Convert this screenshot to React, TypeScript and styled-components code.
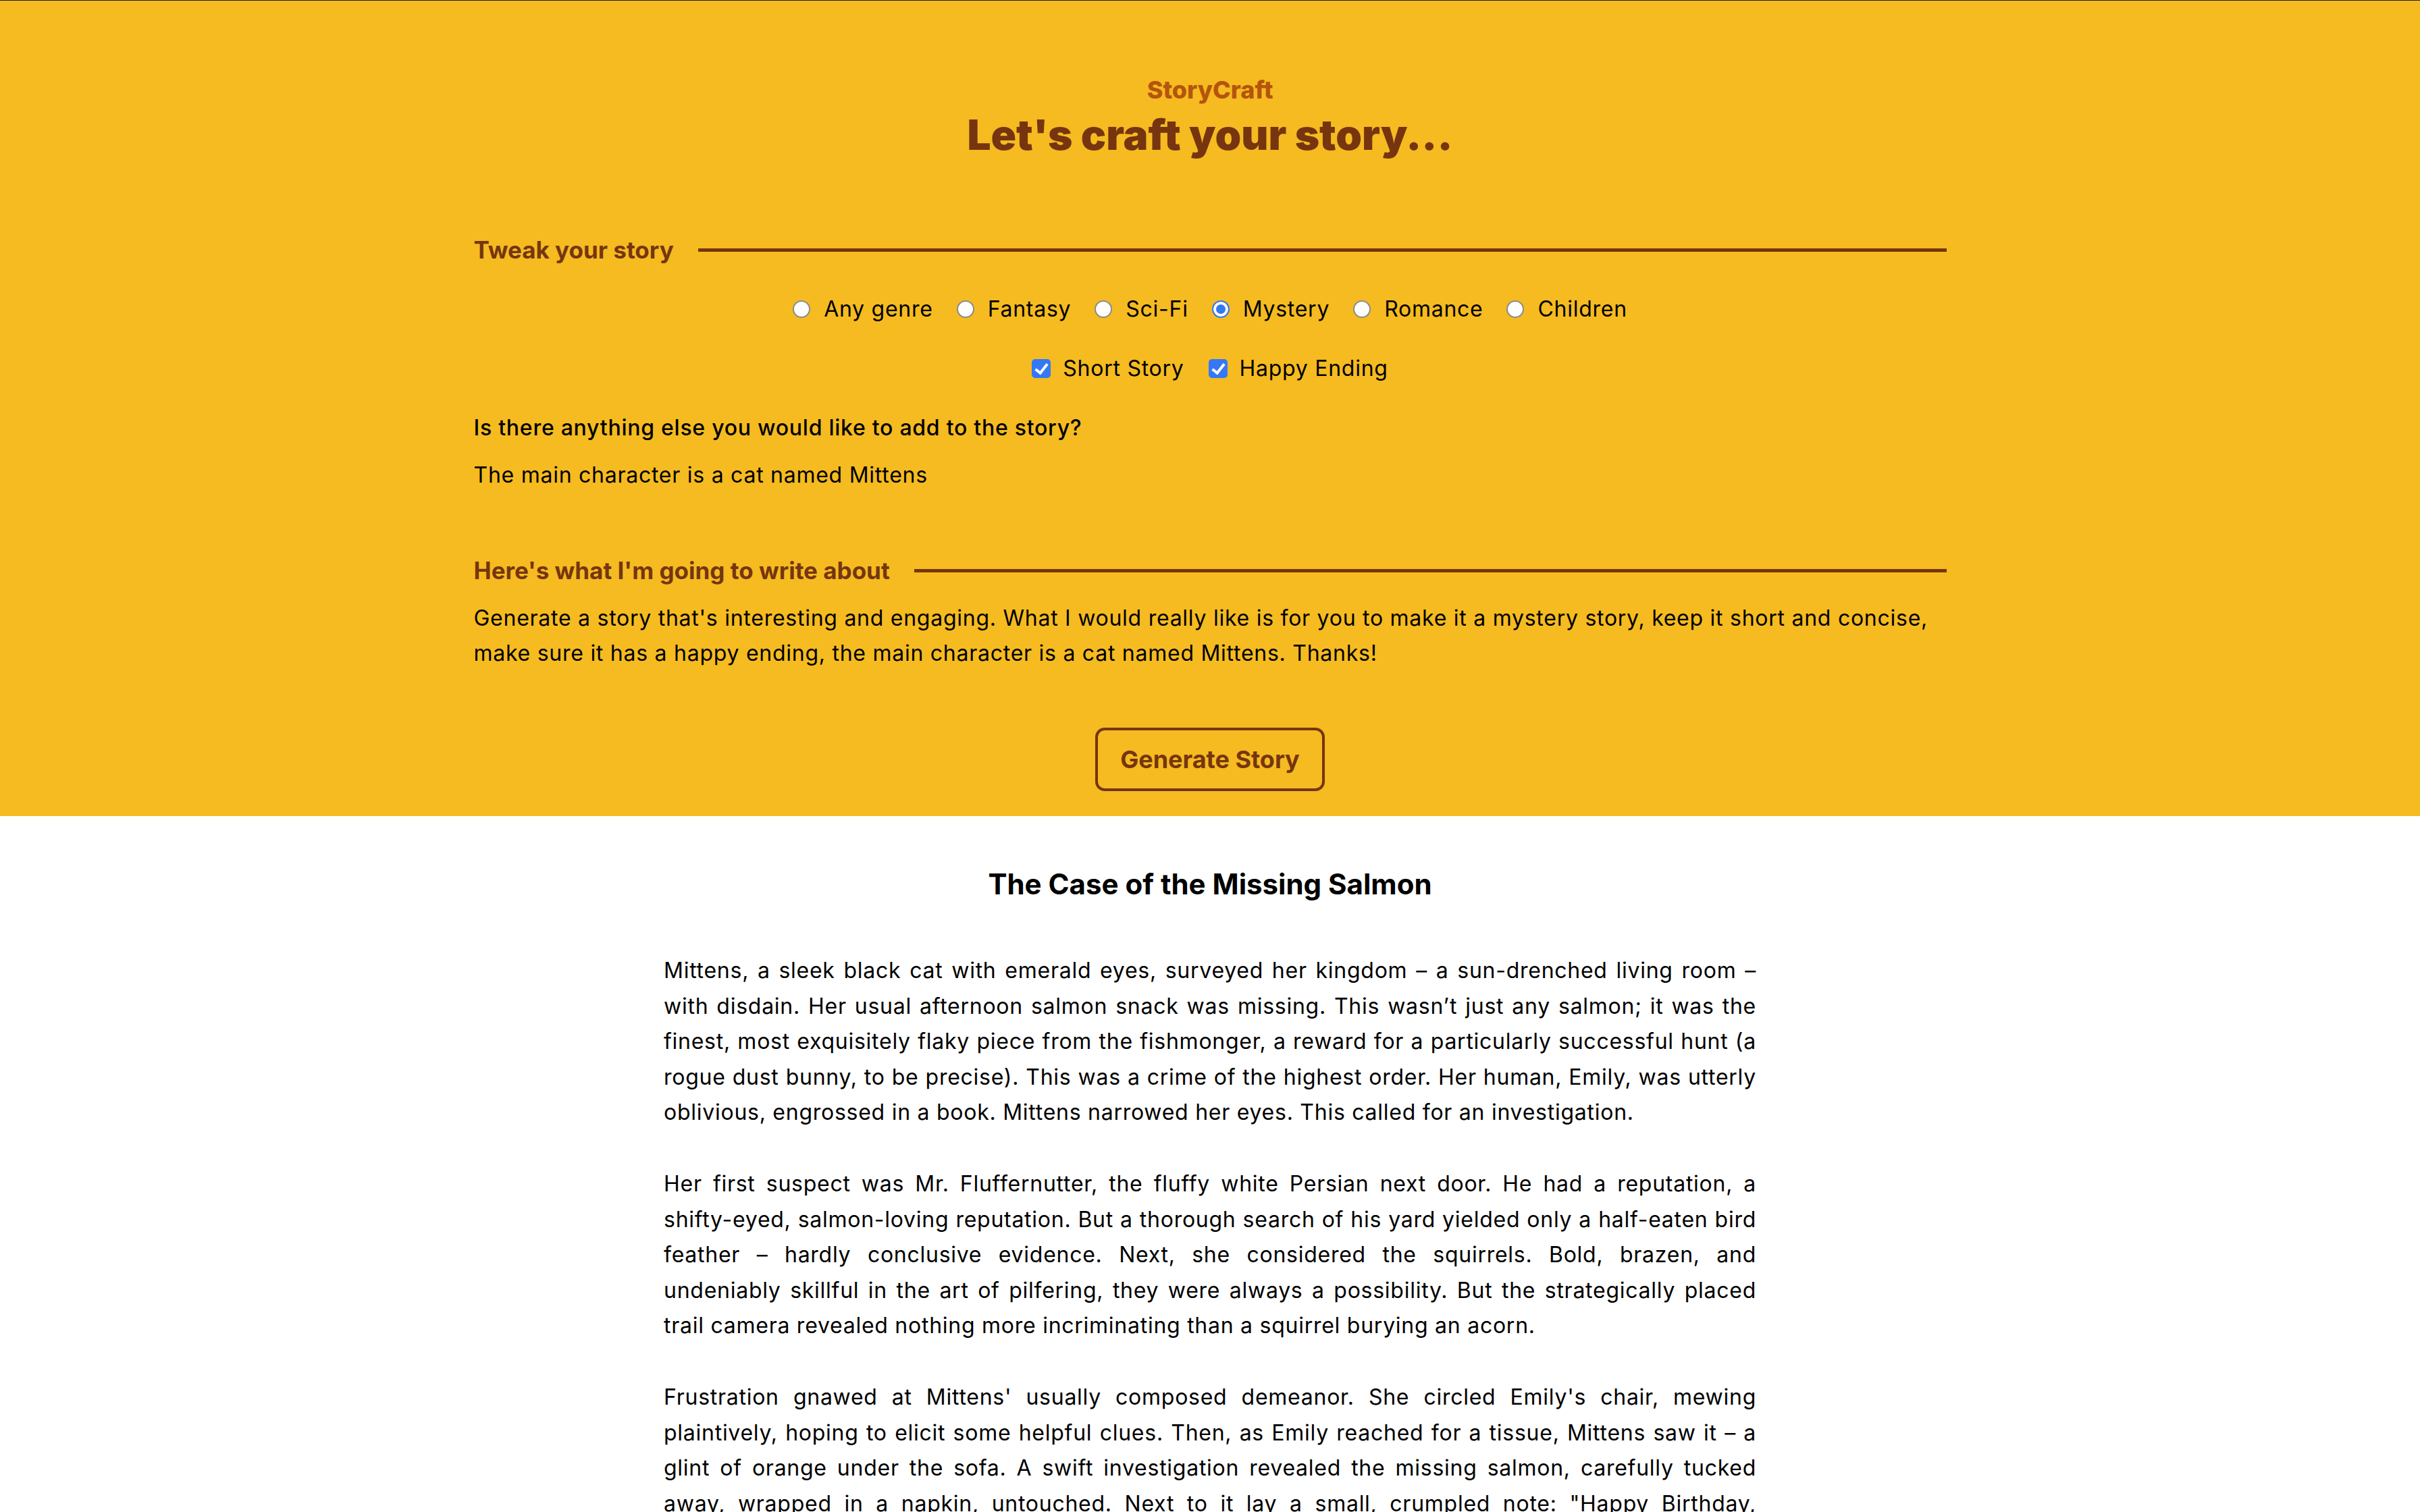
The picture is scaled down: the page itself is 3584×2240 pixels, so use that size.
import React from "react";
import styled, { createGlobalStyle } from "styled-components";

const BROWN = "#76350f";
const AMBER = "#b5540d";
const YELLOW = "#f5bb20";
const BLUE = "#3478f6";
const BODY_TRACKING = "0.74px";

const GlobalStyle = createGlobalStyle`
  html, body { margin: 0; padding: 0; background: #ffffff; }
  body {
    font-family: Inter, "Noto Sans", "Liberation Sans", sans-serif;
    color: #000;
    -webkit-font-smoothing: antialiased;
  }
  * { box-sizing: border-box; }
`;

const Page = styled.div`
  border-top: 1px solid #1e1e1e;
  min-height: 2240px;
`;

const Hero = styled.header`
  background: ${YELLOW};
  padding: 108px 0 37px;
`;

const Inner = styled.div`
  width: 2181px;
  margin: 0 auto;
`;

const Brand = styled.p`
  margin: 0;
  text-align: center;
  font-size: 36px;
  font-weight: 800;
  line-height: 48px;
  color: ${AMBER};
`;

const Title = styled.h1`
  margin: 7px 0 0;
  text-align: center;
  font-size: 62px;
  font-weight: 900;
  line-height: 72px;
  color: ${BROWN};
`;

const SectionHeading = styled.div<{ $mt: number }>`
  display: flex;
  align-items: center;
  gap: 36px;
  margin-top: ${(p) => p.$mt}px;
  font-size: 35px;
  font-weight: 700;
  line-height: 48px;
  color: ${BROWN};
`;

const Rule = styled.span`
  flex: 1;
  height: 5px;
  background: ${BROWN};
`;

const OptionRow = styled.div<{ $gap: number }>`
  display: flex;
  justify-content: center;
  align-items: center;
  gap: ${(p) => p.$gap}px;
  margin-top: 40px;
`;

const Option = styled.label<{ $gap: number }>`
  display: flex;
  align-items: center;
  gap: ${(p) => p.$gap}px;
  font-size: 32px;
  line-height: 48px;
  letter-spacing: ${BODY_TRACKING};
  color: #000;
`;

const Radio = styled.input.attrs({ type: "radio" })`
  appearance: none;
  margin: 0;
  width: 26px;
  height: 26px;
  border-radius: 50%;
  border: 2px solid #8b8b8b;
  background: #fff;
  &:checked {
    border-color: ${BLUE};
    background: ${BLUE};
    box-shadow: inset 0 0 0 4px #fff;
  }
`;

const Checkbox = styled.input.attrs({ type: "checkbox" })`
  appearance: none;
  position: relative;
  margin: 0;
  width: 28px;
  height: 28px;
  border-radius: 5px;
  border: 2px solid #8b8b8b;
  background: #fff;
  &:checked {
    border-color: ${BLUE};
    background: ${BLUE};
  }
  &:checked::after {
    content: "";
    position: absolute;
    left: 7px;
    top: 1px;
    width: 7px;
    height: 15px;
    border: solid #fff;
    border-width: 0 4px 4px 0;
    transform: rotate(38deg);
  }
`;

const Question = styled.p`
  margin: 40px 0 0;
  font-size: 32px;
  font-weight: 500;
  line-height: 48px;
  letter-spacing: ${BODY_TRACKING};
`;

const ExtraInput = styled.input`
  display: block;
  margin-top: 22px;
  width: 100%;
  height: 48px;
  padding: 0;
  border: 0;
  background: transparent;
  font-family: inherit;
  font-size: 32px;
  line-height: 48px;
  letter-spacing: ${BODY_TRACKING};
  color: #000;
  outline: none;
`;

const Prompt = styled.p`
  margin: 21px 0 0;
  font-size: 32px;
  line-height: 52px;
  letter-spacing: ${BODY_TRACKING};
`;

const ButtonRow = styled.div`
  display: flex;
  justify-content: center;
  margin-top: 84px;
`;

const GenerateButton = styled.button`
  height: 94px;
  padding: 0 33px;
  border: 4px solid ${BROWN};
  border-radius: 14px;
  background: transparent;
  color: ${BROWN};
  font-family: inherit;
  font-size: 36px;
  font-weight: 700;
  line-height: 48px;
  cursor: pointer;
`;

const Story = styled.article`
  width: 1618px;
  margin: 0 auto;
  padding: 71px 0 120px;
`;

const StoryTitle = styled.h2`
  margin: 0 0 72px;
  text-align: center;
  font-size: 42px;
  font-weight: 700;
  line-height: 60px;
`;

const StoryPara = styled.p`
  margin: 0;
  font-size: 32px;
  line-height: 52.6px;
  letter-spacing: ${BODY_TRACKING};
  text-align: justify;
  & + & {
    margin-top: 53px;
  }
`;

const genres = ["Any genre", "Fantasy", "Sci-Fi", "Mystery", "Romance", "Children"];

const paragraphs = [
  "Mittens, a sleek black cat with emerald eyes, surveyed her kingdom – a sun-drenched living room – with disdain. Her usual afternoon salmon snack was missing. This wasn’t just any salmon; it was the finest, most exquisitely flaky piece from the fishmonger, a reward for a particularly successful hunt (a rogue dust bunny, to be precise). This was a crime of the highest order. Her human, Emily, was utterly oblivious, engrossed in a book. Mittens narrowed her eyes. This called for an investigation.",
  "Her first suspect was Mr. Fluffernutter, the fluffy white Persian next door. He had a reputation, a shifty-eyed, salmon-loving reputation. But a thorough search of his yard yielded only a half-eaten bird feather – hardly conclusive evidence. Next, she considered the squirrels. Bold, brazen, and undeniably skillful in the art of pilfering, they were always a possibility. But the strategically placed trail camera revealed nothing more incriminating than a squirrel burying an acorn.",
  "Frustration gnawed at Mittens' usually composed demeanor. She circled Emily's chair, mewing plaintively, hoping to elicit some helpful clues. Then, as Emily reached for a tissue, Mittens saw it – a glint of orange under the sofa. A swift investigation revealed the missing salmon, carefully tucked away, wrapped in a napkin, untouched. Next to it lay a small, crumpled note: \"Happy Birthday, Mittens! Love, Emily.\" The great salmon mystery was solved, and Mittens, purring, decided that perhaps her human wasn't so oblivious after all.",
];

export default function App() {
  const [genre, setGenre] = React.useState("Mystery");
  const [short, setShort] = React.useState(true);
  const [happy, setHappy] = React.useState(true);
  const [extra, setExtra] = React.useState("The main character is a cat named Mittens");

  return (
    <Page>
      <GlobalStyle />
      <Hero>
        <Inner>
          <Brand>StoryCraft</Brand>
          <Title>Let's craft your story...</Title>

          <SectionHeading $mt={110}>
            Tweak your story
            <Rule />
          </SectionHeading>

          <OptionRow $gap={35}>
            {genres.map((g) => (
              <Option key={g} $gap={20}>
                <Radio name="genre" checked={genre === g} onChange={() => setGenre(g)} />
                {g}
              </Option>
            ))}
          </OptionRow>

          <OptionRow $gap={36}>
            <Option $gap={18}>
              <Checkbox checked={short} onChange={() => setShort(!short)} />
              Short Story
            </Option>
            <Option $gap={18}>
              <Checkbox checked={happy} onChange={() => setHappy(!happy)} />
              Happy Ending
            </Option>
          </OptionRow>

          <Question>Is there anything else you would like to add to the story?</Question>
          <ExtraInput value={extra} onChange={(e) => setExtra(e.target.value)} />

          <SectionHeading $mt={93}>
            Here's what I'm going to write about
            <Rule />
          </SectionHeading>
          <Prompt>
            Generate a story that's interesting and engaging. What I would really like is for you to make it a
            mystery story, keep it short and concise, make sure it has a happy ending, the main character is a cat
            named Mittens. Thanks!
          </Prompt>

          <ButtonRow>
            <GenerateButton>Generate Story</GenerateButton>
          </ButtonRow>
        </Inner>
      </Hero>

      <Story>
        <StoryTitle>The Case of the Missing Salmon</StoryTitle>
        {paragraphs.map((p, i) => (
          <StoryPara key={i}>{p}</StoryPara>
        ))}
      </Story>
    </Page>
  );
}
